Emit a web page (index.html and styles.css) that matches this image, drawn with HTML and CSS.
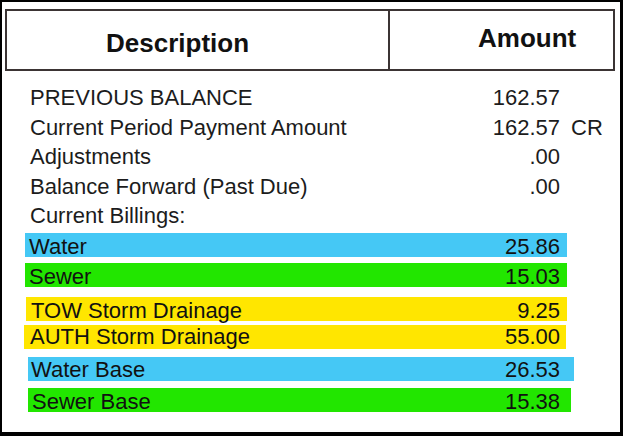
FILE: index.html
```html
<!DOCTYPE html>
<html>
<head>
<meta charset="utf-8">
<link rel="stylesheet" href="styles.css">
</head>
<body>
<div class="statement">
  <div class="head">
    <div class="head-cell head-desc">Description</div>
    <div class="head-cell head-amt">Amount</div>
  </div>
  <div class="lines">
    <div class="line"><span class="desc">PREVIOUS BALANCE</span><span class="amt">162.57</span><span class="sfx"></span></div>
    <div class="line"><span class="desc">Current Period Payment Amount</span><span class="amt">162.57</span><span class="sfx">CR</span></div>
    <div class="line"><span class="desc">Adjustments</span><span class="amt">.00</span><span class="sfx"></span></div>
    <div class="line"><span class="desc">Balance Forward (Past Due)</span><span class="amt">.00</span><span class="sfx"></span></div>
    <div class="line"><span class="desc">Current Billings:</span><span class="amt"></span><span class="sfx"></span></div>
  </div>
  <div class="bills">
    <div class="bill bill-water"><span>Water</span><span>25.86</span></div>
    <div class="bill bill-sewer"><span>Sewer</span><span>15.03</span></div>
    <div class="bill bill-tow"><span>TOW Storm Drainage</span><span>9.25</span></div>
    <div class="bill bill-auth"><span>AUTH Storm Drainage</span><span>55.00</span></div>
    <div class="bill bill-wbase"><span>Water Base</span><span>26.53</span></div>
    <div class="bill bill-sbase"><span>Sewer Base</span><span>15.38</span></div>
  </div>
</div>
</body>
</html>
```
FILE: styles.css
```css
html, body {
  margin: 0;
  padding: 0;
  background: #fff;
}
.statement {
  width: 623px;
  height: 436px;
  box-sizing: border-box;
  border-style: solid;
  border-color: #000;
  border-width: 2px 3px 4px 2px;
  padding: 7px 0 0 3px;
  font-family: "Liberation Sans", Arial, sans-serif;
  color: #1c1c1c;
}
.head {
  width: 610px;
  height: 62px;
  box-sizing: border-box;
  border: 2px solid #3b3434;
  display: grid;
  grid-template-columns: 383px 1fr;
}
.head-cell {
  font-size: 26px;
  font-weight: bold;
  line-height: 30px;
  color: #111;
}
.head-desc {
  border-right: 2px solid #3b3434;
  padding: 17px 0 0 99px;
}
.head-amt {
  padding: 12px 0 0 88px;
}
.lines {
  margin-top: 12px;
  padding-left: 25px;
}
.line {
  display: grid;
  grid-template-columns: 400px 130px 40px;
  font-size: 22px;
  line-height: 29.5px;
  height: 29.5px;
}
.amt {
  text-align: right;
}
.sfx {
  padding-left: 11px;
}
.bills {
  display: flex;
  flex-direction: column;
}
.bill {
  display: flex;
  justify-content: space-between;
  box-sizing: border-box;
  height: 24px;
  padding: 3px 7px 0 4px;
  font-size: 22px;
  line-height: 21px;
  color: #111;
}
.bill-water {
  background: #45c8f5;
  margin: 2.5px 0 0 20px;
  width: 542px;
}
.bill-sewer {
  background: #22e600;
  margin: 6px 0 0 20px;
  width: 542px;
}
.bill-tow {
  background: #ffe600;
  margin: 10px 0 0 21px;
  width: 541px;
  padding-left: 5px;
}
.bill-auth {
  background: #ffe600;
  margin: 4px 0 0 19px;
  width: 542px;
  padding-top: 1px;
  padding-left: 6px;
  padding-right: 6px;
}
.bill-wbase {
  background: #45c8f5;
  margin: 8px 0 0 23px;
  width: 546px;
  padding-top: 2px;
  padding-left: 3px;
  padding-right: 14px;
}
.bill-sbase {
  background: #22e600;
  margin: 7px 0 0 23px;
  width: 543px;
  padding-left: 4px;
  padding-right: 11px;
}
```
